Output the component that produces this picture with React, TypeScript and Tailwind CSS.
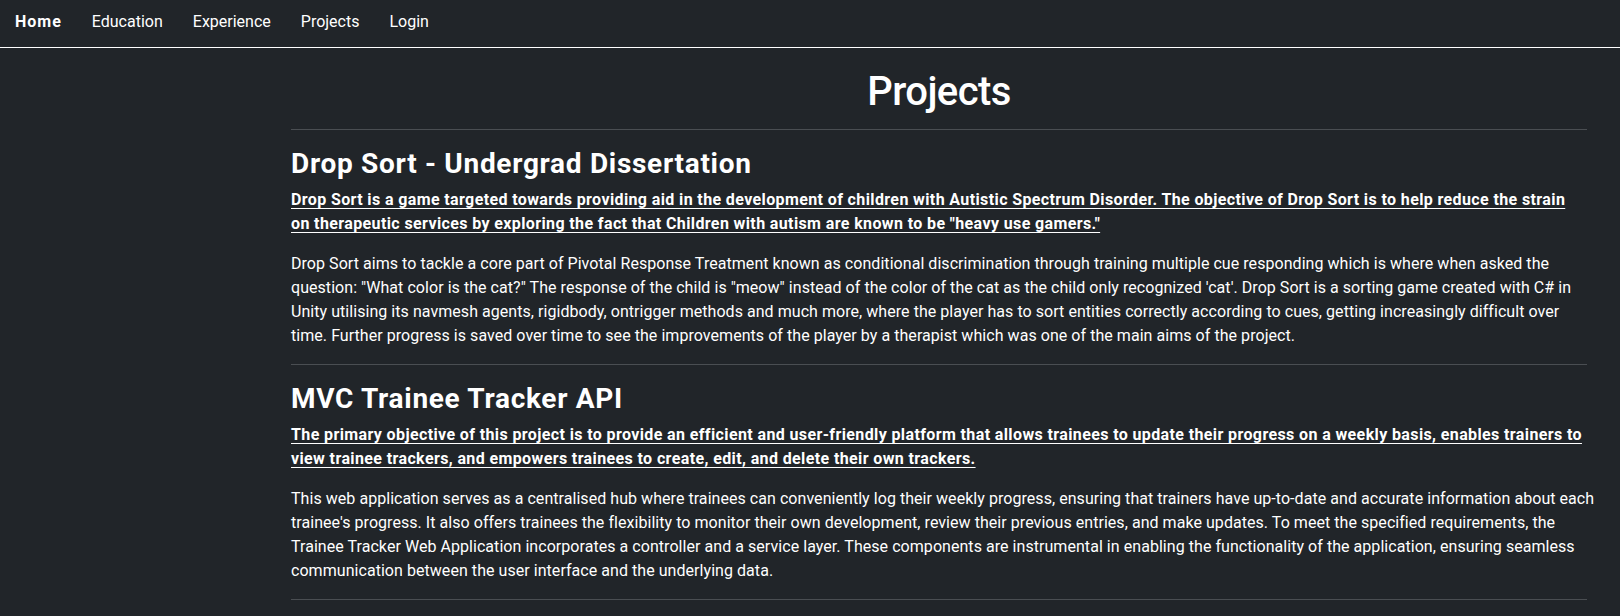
const navLinks = ["Home", "Education", "Experience", "Projects", "Login"];

type Project = {
  title: string;
  summary: string[];
  details: string[];
};

const projects: Project[] = [
  {
    title: "Drop Sort - Undergrad Dissertation",
    summary: [
      "Drop Sort is a game targeted towards providing aid in the development of children with Autistic Spectrum Disorder. The objective of Drop Sort is to help reduce the strain",
      'on therapeutic services by exploring the fact that Children with autism are known to be "heavy use gamers."',
    ],
    details: [
      "Drop Sort aims to tackle a core part of Pivotal Response Treatment known as conditional discrimination through training multiple cue responding which is where when asked the",
      "question: \"What color is the cat?\" The response of the child is \"meow\" instead of the color of the cat as the child only recognized 'cat'. Drop Sort is a sorting game created with C# in",
      "Unity utilising its navmesh agents, rigidbody, ontrigger methods and much more, where the player has to sort entities correctly according to cues, getting increasingly difficult over",
      "time. Further progress is saved over time to see the improvements of the player by a therapist which was one of the main aims of the project.",
    ],
  },
  {
    title: "MVC Trainee Tracker API",
    summary: [
      "The primary objective of this project is to provide an efficient and user-friendly platform that allows trainees to update their progress on a weekly basis, enables trainers to",
      "view trainee trackers, and empowers trainees to create, edit, and delete their own trackers.",
    ],
    details: [
      "This web application serves as a centralised hub where trainees can conveniently log their weekly progress, ensuring that trainers have up-to-date and accurate information about each",
      "trainee's progress. It also offers trainees the flexibility to monitor their own development, review their previous entries, and make updates. To meet the specified requirements, the",
      "Trainee Tracker Web Application incorporates a controller and a service layer. These components are instrumental in enabling the functionality of the application, ensuring seamless",
      "communication between the user interface and the underlying data.",
    ],
  },
];

function Lines({ lines }: { lines: string[] }) {
  return (
    <>
      {lines.map((l, i) => (
        <span key={i} className="block whitespace-nowrap">
          {l}
        </span>
      ))}
    </>
  );
}

export default function App() {
  return (
    <div className="min-h-[616px] bg-[#212529] text-white font-['Segoe_UI','Roboto','Liberation_Sans',sans-serif]">
      {/* navbar */}
      <nav className="h-[48px] border-b border-white flex items-center pb-[4px] pl-[15px] text-[16px]">
        {navLinks.map((link, i) => (
          <a
            key={link}
            href="#"
            className={`${i === 0 ? "font-bold pl-0 tracking-[1px]" : "pl-[15px]"} pr-[15px] text-white`}
          >
            {link}
          </a>
        ))}
      </nav>

      <main className="ml-[291px] w-[1296px]">
        <h1 className="mt-[20px] text-center text-[40px] leading-[48px] font-medium tracking-[-0.6px]">Projects</h1>
        <hr className="mt-[13px] border-t border-[#4a4e52]" />

        {projects.map((p) => (
          <section key={p.title}>
            <h2 className="mt-[17px] mb-[7px] text-[28px] leading-[34px] font-bold tracking-[0.7px]">{p.title}</h2>
            <p className="mb-[16px] text-[16px] leading-[24px] font-bold tracking-[0.38px] underline underline-offset-[3px]">
              <Lines lines={p.summary} />
            </p>
            <p className="mb-[16px] text-[16px] leading-[24px] tracking-[0.05px]">
              <Lines lines={p.details} />
            </p>
            <hr className="border-t border-[#4a4e52]" />
          </section>
        ))}
      </main>
    </div>
  );
}
